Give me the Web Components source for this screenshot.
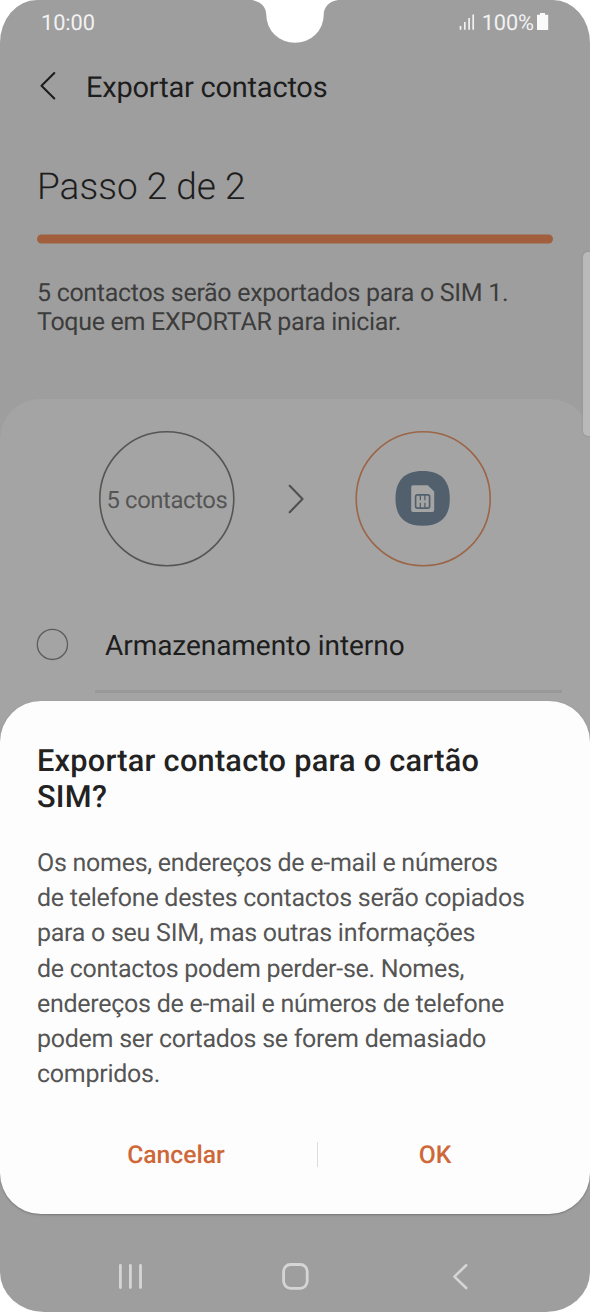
<!DOCTYPE html>
<html lang="pt">
<head>
<meta charset="utf-8">
<title>Exportar contactos</title>
<style>
html,body{margin:0;padding:0;background:#fff}
body{width:590px;height:1312px;overflow:hidden;font-family:Roboto,"Liberation Sans",sans-serif;text-rendering:geometricPrecision}
</style>
</head>
<body>
<phone-screen>
  <status-bar time="10:00" battery="100%"></status-bar>
  <app-header>Exportar contactos</app-header>
  <step-intro>
    <span slot="title">Passo 2 de 2</span>
    <span>5 contactos serão exportados para o SIM 1.<br>Toque em EXPORTAR para iniciar.</span>
  </step-intro>
  <export-card>
    <transfer-flow>5 contactos</transfer-flow>
    <radio-row>Armazenamento interno</radio-row>
  </export-card>
  <edge-handle slot="over"></edge-handle>
  <confirm-dialog slot="over">
    <span slot="title">Exportar contacto para o cartão<br>SIM?</span>
    <span>Os nomes, endereços de e-mail e números<br>de telefone destes contactos serão copiados<br>para o seu SIM, mas outras informações<br>de contactos podem perder-se. Nomes,<br>endereços de e-mail e números de telefone<br>podem ser cortados se forem demasiado<br>compridos.</span>
    <span slot="cancel">Cancelar</span>
    <span slot="ok">OK</span>
  </confirm-dialog>
  <nav-bar slot="nav"></nav-bar>
</phone-screen>
<script>
const define = (name, html) => customElements.define(name, class extends HTMLElement {
  constructor() {
    super();
    this.attachShadow({mode: 'open'}).innerHTML = html;
    this.shadowRoot.querySelectorAll('[data-attr]').forEach(n => {
      n.textContent = this.getAttribute(n.dataset.attr);
    });
  }
});

define('phone-screen', `<style>
:host{position:relative;display:flex;flex-direction:column;width:590px;height:1312px;overflow:hidden;background:#9e9e9e;border-radius:37px 37px 44px 44px/43px 43px 40px 40px}
main{flex:1;display:flex;flex-direction:column;min-height:0}
.notch{position:absolute;left:250px;top:0;display:block}
</style>
<main><slot></slot></main>
<slot name="nav"></slot>
<svg class="notch" width="90" height="44" viewBox="0 0 90 44"><path d="M2 0C11 1.500 16.300 7 16.300 15A28.700 27.800 0 0 0 73.700 15C73.700 7 79 1.500 88 0Z" fill="#fff"/></svg>
<slot name="over"></slot>`);

define('status-bar', `<style>
:host{display:flex;align-items:center;justify-content:space-between;height:44px;padding:0 40px 0 41px;box-sizing:border-box;font-size:21.800px;line-height:40px;color:#f2f2f2}
div{display:flex;align-items:center}
svg{display:block}
span{padding-top:3px;letter-spacing:-.1px}
</style>
<span data-attr="time"></span>
<div><svg width="23" height="44" viewBox="0 0 23 44"><path d="M1.500 26v3.700M5.800 22v7.700M10.100 18v11.700M14.200 14.500v15.200" stroke="#f2f2f2" stroke-width="1.700" fill="none"/></svg>
<span data-attr="battery"></span>
<svg width="16" height="44" viewBox="0 0 16 44"><path d="M3 14.800H6V13h5v1.800h3.200V30H3z" fill="#fafafa"/></svg></div>`);

define('app-header', `<style>
:host{display:flex;align-items:center;height:84px;padding-left:38px;gap:28px;font-size:29px;line-height:84px;letter-spacing:-.22px;color:#1d1d1d}
svg{display:block}
span{padding-top:3px}
</style><svg width="20" height="84" viewBox="0 0 20 84"><path d="M16.300 29L3.500 41.700 16.300 54.500" fill="none" stroke="#1d1d1d" stroke-width="2.100" stroke-linecap="round" stroke-linejoin="round"/></svg><span><slot></slot></span>`);

define('step-intro', `<style>
:host{display:flex;flex-direction:column;height:271px;padding:0 37px;box-sizing:border-box;color:#3c3c3c}
h1{margin:37px 0 0;font-size:37px;line-height:46px;font-weight:300;color:#1d1d1d}
svg{display:block;margin-top:23px}
p{margin:35px 0 0;font-size:25px;line-height:29px;letter-spacing:-.31px}
</style><h1><slot name="title"></slot></h1><svg width="516" height="10"><rect y=".4" width="516" height="9.200" rx="4.600" fill="#a15f3e"/></svg><p><slot></slot></p>`);

define('export-card', `<style>
:host{display:flex;flex-direction:column;height:520px;border-radius:40px;background:#a4a4a4}
</style><slot></slot>`);

define('transfer-flow', `<style>
:host{display:flex;align-items:center;padding:32px 99px 0;justify-content:space-between;height:136px}
.c{display:grid;place-items:center;width:136px;height:136px;font-size:23.800px;line-height:30px;letter-spacing:-.38px;color:#555;white-space:nowrap}
.c>*{grid-area:1/1}
span{padding-top:2px}
svg{display:block}
</style>
<div class="c"><svg width="136" height="136"><circle cx="67.800" cy="67.800" r="67" fill="none" stroke="#555" stroke-width="1.600"/></svg><span><slot></slot></span></div>
<svg width="18" height="32" viewBox="0 0 18 32"><path d="M3.700 2.800L16.500 16 3.700 29.200" fill="none" stroke="#505050" stroke-width="2.100" stroke-linecap="round" stroke-linejoin="round"/></svg>
<div class="c"><svg width="136" height="136"><circle cx="68.200" cy="67.800" r="67" fill="none" stroke="#9c6547" stroke-width="1.600"/></svg><svg width="56" height="56" viewBox="0 0 56 56">
<path d="M27.700 0C46 0 54.800 9.500 54.800 27.500S46 54.800 27.700 54.800.500 45.500.500 27.500 9.500 0 27.700 0Z" fill="#52606d"/>
<path d="M18 14.300h14.700l6.500 6.300V39.300a1.800 1.800 0 0 1-1.800 1.800H18a1.800 1.800 0 0 1-1.800-1.800V16.100A1.800 1.800 0 0 1 18 14.300Z" fill="#a4a4a4"/>
<rect x="20.600" y="23.900" width="14" height="13.200" rx="1.800" fill="none" stroke="#52606d" stroke-width="1.700"/>
<path d="M25.300 24v5.300M29.900 24v5.300M25.300 31.800v5.200M29.900 31.800v5.200" stroke="#52606d" stroke-width="1.300" fill="none"/>
</svg></div>`);

define('radio-row', `<style>
:host{display:grid;grid-template-columns:58px 1fr;height:126px;padding:0 28px 0 37px}
svg{display:block;margin:61px 0 0 -1px}
div{height:126px;border-bottom:3px solid #999;box-sizing:border-box;padding:58.500px 0 0 10px;font-size:28px;line-height:40px;letter-spacing:-.05px;color:#1d1d1d}
</style><svg width="33" height="33"><circle cx="16.400" cy="16.400" r="15.100" fill="none" stroke="#5c5c5c" stroke-width="1.300"/></svg><div><slot></slot></div>`);

define('edge-handle', `<style>
:host{position:absolute;left:583px;top:252px;width:12px;height:184px;border-radius:5px;background:#b9b9b9;box-shadow:0 0 2px #888}
</style>`);

define('confirm-dialog', `<style>
:host{position:absolute;left:0;top:701px;width:590px;height:512.500px;box-sizing:border-box;border-radius:41px;background:#fdfdfd;padding:43px 37px 0;box-shadow:0 1px 2px #777;display:flex;flex-direction:column}
h2{margin:0;font-size:30.700px;line-height:36px;font-weight:500;letter-spacing:.26px;color:#222}
p{margin:30px 0 0;font-size:25px;line-height:35.200px;letter-spacing:-.27px;color:#555;white-space:nowrap}
footer{display:grid;grid-template-columns:280px 1px 235px;align-items:center;height:40px;margin-top:43px;font-size:24.700px;font-weight:500;color:#cf6838;text-align:center}
i{height:25px;margin-top:-2px;background:#ddd}
::slotted([slot=cancel]){padding-right:2px}
::slotted([slot=ok]){padding-right:1px}
</style><h2><slot name="title"></slot></h2><p><slot></slot></p>
<footer><slot name="cancel"></slot><i></i><slot name="ok"></slot></footer>`);

define('nav-bar', `<style>
:host{display:grid;grid-template-columns:repeat(3,1fr);align-items:center;justify-items:center;height:71px;padding:0 47px}
svg{display:block}
</style>
<svg width="28" height="30" viewBox="0 0 28 30"><path d="M4.400 3.300v22.200M14.400 3.300v22.200M24.500 3.300v22.200" stroke="#d5d5d5" stroke-width="2.800" stroke-linecap="round"/></svg>
<svg width="30" height="30" viewBox="0 0 30 30"><rect x="3.600" y="2.500" width="23.600" height="23.800" rx="7" fill="none" stroke="#d5d5d5" stroke-width="2.800"/></svg>
<svg width="20" height="30" viewBox="0 0 20 30"><path d="M16.200 3.300L4.400 14.600 16.200 26" fill="none" stroke="#d5d5d5" stroke-width="2.600" stroke-linecap="round" stroke-linejoin="round"/></svg>`);
</script>
</body>
</html>
